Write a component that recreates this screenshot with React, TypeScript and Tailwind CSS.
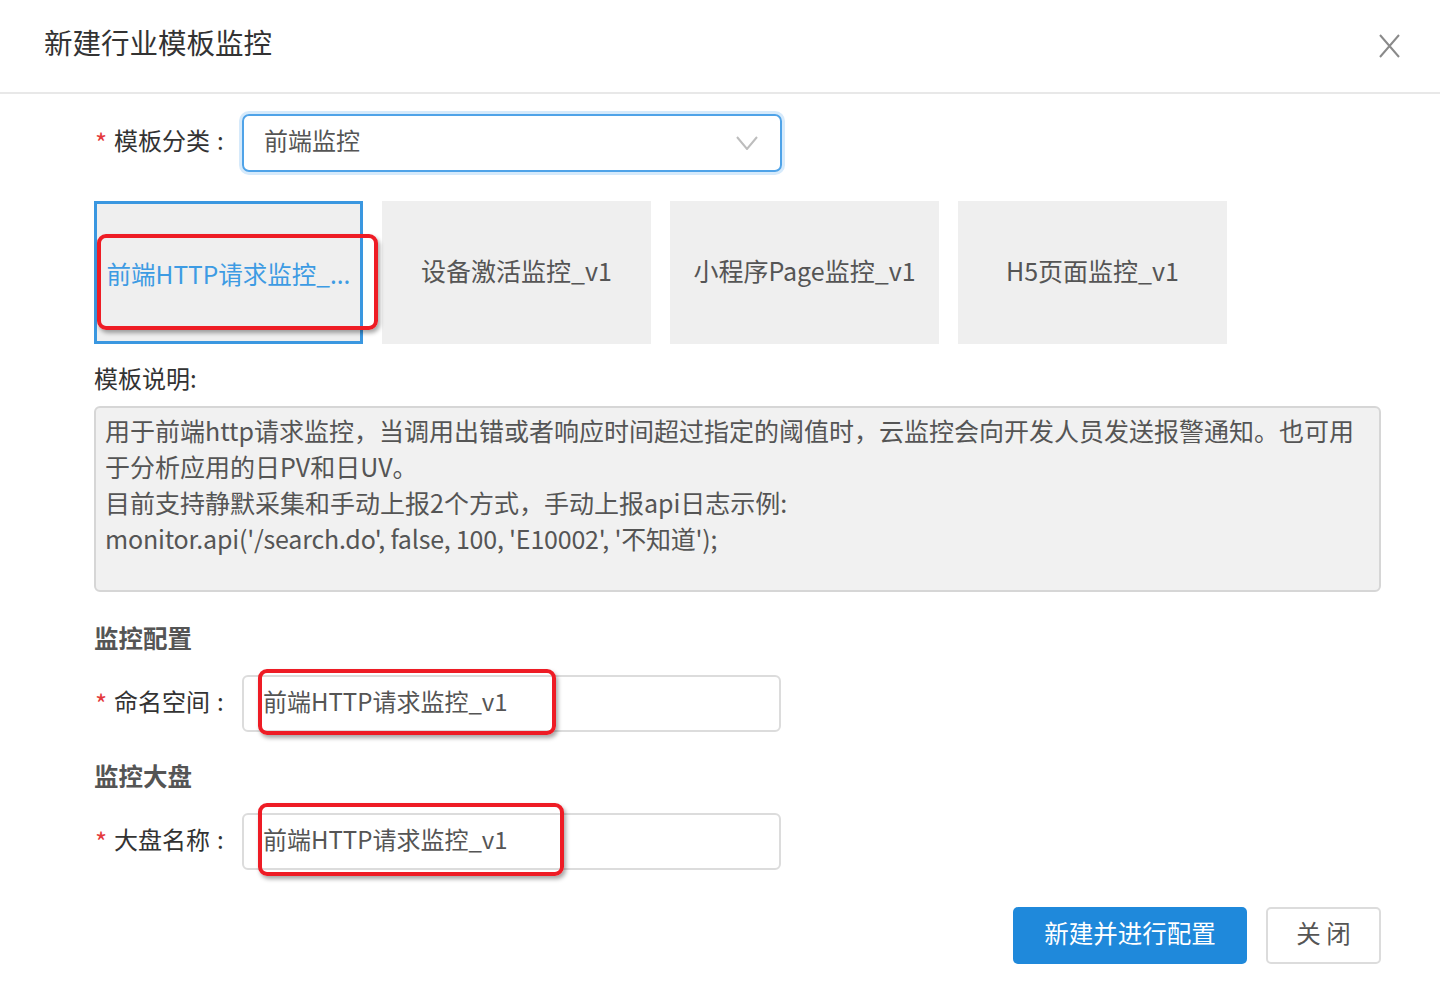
const templates = ['前端HTTP请求监控_...', '设备激活监控_v1', '小程序Page监控_v1', 'H5页面监控_v1'];

function FieldLabel({ text }: { text: string }) {
  return (
    <div className="w-[148px] shrink-0 flex items-center text-[24px] text-[#333] -translate-y-[3px]">
      <span className="w-[20px] pl-[1px] text-[26px] leading-none text-[#e4393c] translate-y-[2px]">*</span>
      <span>{text}</span>
      <span className="ml-[7px]">:</span>
    </div>
  );
}

function TextInput({ value }: { value: string }) {
  return (
    <div className="w-[539px] h-[57px] border-2 border-[#dcdcdc] rounded-[6px] flex items-center pl-[19px] text-[24px] text-[#555]">
      <span className="-translate-y-[3px]">{value}</span>
    </div>
  );
}

export default function App() {
  const selected = 0;

  return (
    <div className="relative w-[1440px] h-[986px] overflow-hidden bg-white font-['Noto_Sans_CJK_SC','Noto_Sans',sans-serif]">
      {/* Header */}
      <header className="h-[94px] border-b-[2px] border-[#e8e8e8] flex items-center justify-between pl-[44px] pr-[40px]">
        <h1 className="text-[28.5px] text-[#333] -translate-y-[4px]">新建行业模板监控</h1>
        <button className="w-[22px] h-[24px] flex items-center justify-center">
          <svg width="21" height="24" viewBox="0 0 21 24" fill="none" stroke="#8a8a8a" strokeWidth="2">
            <path d="M1 1 L20 23 M20 1 L1 23" />
          </svg>
        </button>
      </header>

      <div className="pl-[94px] pr-[59px]">
        {/* Category select */}
        <div className="mt-[20px] flex items-center">
          <FieldLabel text="模板分类" />
          <div className="w-[540px] h-[58px] border-2 border-[#4fa3e8] rounded-[7px] ring-[3px] ring-[#d6eafb] flex items-center justify-between pl-[20px] pr-[22px] text-[24px] text-[#555]">
            <span className="-translate-y-[3px]">前端监控</span>
            <svg width="22" height="14" viewBox="0 0 22 14" fill="none" stroke="#bdbdbd" strokeWidth="2">
              <path d="M1 1 L11 13 L21 1" />
            </svg>
          </div>
        </div>

        {/* Template cards */}
        <div className="mt-[29px] flex gap-[19px]">
          {templates.map((name, i) => (
            <div
              key={name}
              className={`w-[269px] h-[143px] bg-[#efefef] flex items-center justify-center px-[10px] text-[25px] ${
                i === selected ? 'border-[3px] border-[#3a97e0] text-[#3d9be3]' : 'text-[#555]'
              }`}
            >
              <span className={`whitespace-nowrap ${i === selected ? 'text-[24.5px] translate-y-[2px]' : '-translate-y-[2px]'}`}>
                {name}
              </span>
            </div>
          ))}
        </div>

        {/* Description */}
        <div className="mt-[17px] h-[36px] leading-[36px] text-[24px] text-[#333] -translate-y-[1px]">模板说明:</div>
        <div className="mt-[9px] h-[186px] bg-[#f1f1f1] border-2 border-[#d6d6d6] rounded-[6px] pl-[9px] pt-[4px] text-[25px] leading-[36px] text-[#555]">
          用于前端http请求监控，当调用出错或者响应时间超过指定的阈值时，云监控会向开发人员发送报警通知。也可用
          <br />
          于分析应用的日PV和日UV。
          <br />
          目前支持静默采集和手动上报2个方式，手动上报api日志示例:
          <br />
          <span className="tracking-[-0.2px]">monitor.api('/search.do', false, 100, 'E10002', '不知道');</span>
        </div>

        {/* Monitor config */}
        <div className="mt-[29px] h-[36px] leading-[36px] text-[24.5px] font-bold text-[#555] -translate-y-[1px]">监控配置</div>
        <div className="mt-[18px] flex items-center">
          <FieldLabel text="命名空间" />
          <TextInput value="前端HTTP请求监控_v1" />
        </div>

        {/* Dashboard */}
        <div className="mt-[27px] h-[36px] leading-[36px] text-[24.5px] font-bold text-[#555] -translate-y-[1px]">监控大盘</div>
        <div className="mt-[18px] flex items-center">
          <FieldLabel text="大盘名称" />
          <TextInput value="前端HTTP请求监控_v1" />
        </div>

        {/* Footer buttons */}
        <div className="mt-[37px] flex justify-end gap-[19px]">
          <button className="w-[234px] h-[57px] rounded-[5px] bg-[#1f89db] text-white text-[24.5px] pb-[5px]">新建并进行配置</button>
          <button className="w-[115px] h-[57px] rounded-[5px] border-2 border-[#dcdcdc] bg-white text-[#555] text-[24.5px] pb-[5px]">关 闭</button>
        </div>
      </div>

      {/* Red annotation boxes */}
      <div className="absolute left-[97px] top-[234px] w-[281px] h-[96px] border-[4px] border-[#ee1c25] rounded-[9px] shadow-[2px_3px_4px_rgba(0,0,0,0.35)]" />
      <div className="absolute left-[258px] top-[669px] w-[298px] h-[66px] border-[4px] border-[#ee1c25] rounded-[9px] shadow-[2px_3px_4px_rgba(0,0,0,0.35)]" />
      <div className="absolute left-[258px] top-[803px] w-[306px] h-[73px] border-[4px] border-[#ee1c25] rounded-[9px] shadow-[2px_3px_4px_rgba(0,0,0,0.35)]" />
    </div>
  );
}
